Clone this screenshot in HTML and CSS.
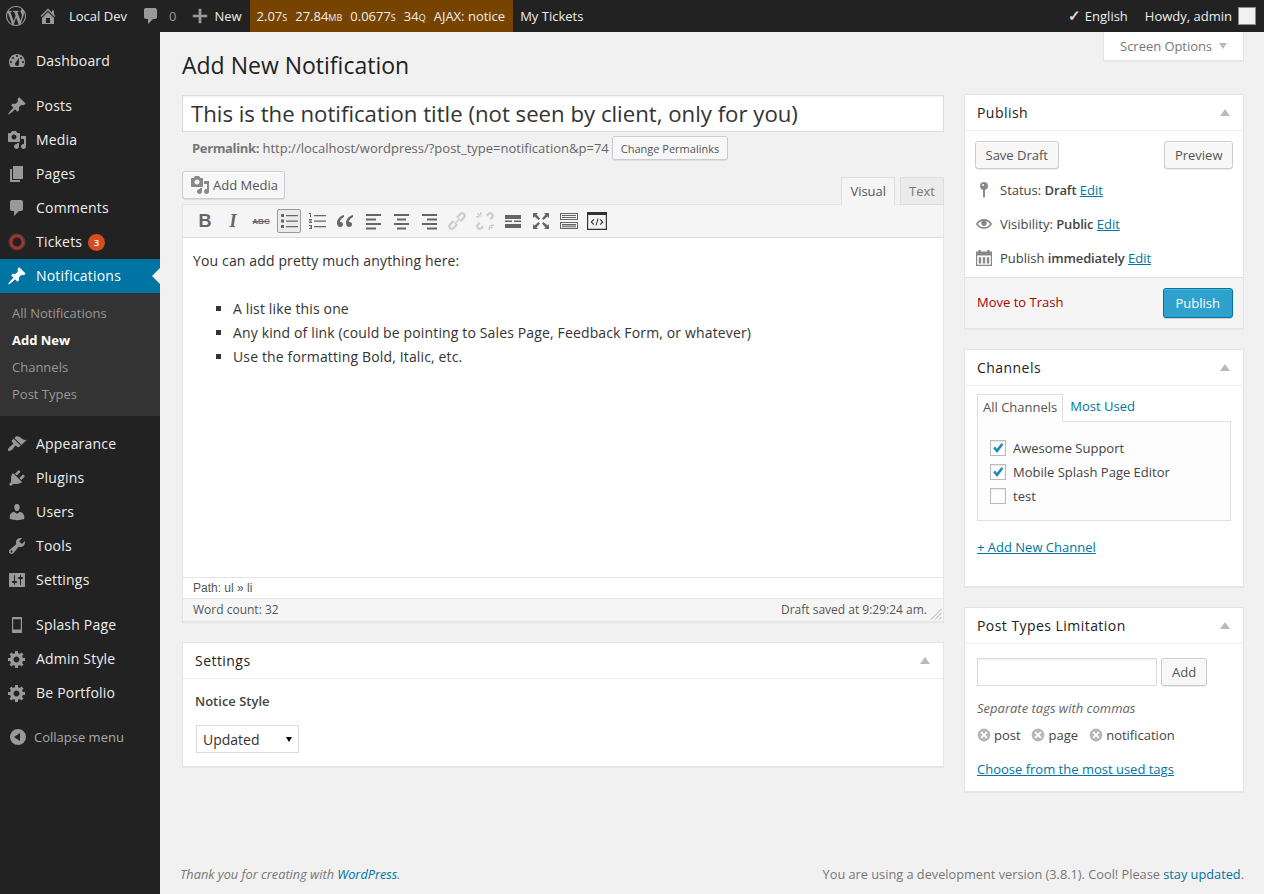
FILE: index.html
```html
<!DOCTYPE html>
<html lang="en">
<head>
    <meta charset="UTF-8">
    <meta name="viewport" content="width=device-width, initial-scale=1.0">
    <title>Add New Notification</title>
    <link rel="stylesheet" href="styles.css">
</head>
<body>

<svg class="sprite" aria-hidden="true">
    <symbol id="i-wp" viewBox="0 0 20 20"><path d="M20 10c0-5.51-4.49-10-10-10C4.48 0 0 4.49 0 10c0 5.52 4.48 10 10 10 5.51 0 10-4.48 10-10zM7.78 15.37L4.37 6.22c.55-.02 1.17-.08 1.17-.08.5-.06.44-1.13-.06-1.11 0 0-1.45.11-2.37.11-.18 0-.37 0-.58-.01C4.12 2.69 6.87 1.11 10 1.11c2.33 0 4.45.87 6.05 2.34-.68-.11-1.65.39-1.65 1.58 0 .74.45 1.36.9 2.1.35.61.55 1.36.55 2.46 0 1.49-1.4 5-1.4 5l-3.03-8.37c.54-.02.82-.17.82-.17.5-.05.44-1.25-.06-1.22 0 0-1.44.12-2.38.12-.87 0-2.33-.12-2.33-.12-.5-.03-.56 1.2-.06 1.22l.92.08 1.26 3.41zM17.41 10c.24-.64.74-1.87.43-4.25.7 1.29 1.05 2.71 1.05 4.25 0 3.29-1.73 6.24-4.4 7.78.97-2.59 1.94-5.2 2.92-7.78zM6.1 18.09C3.12 16.65 1.11 13.53 1.11 10c0-1.3.23-2.48.72-3.59C3.25 10.3 4.67 14.2 6.1 18.09zm4.03-6.63l2.58 6.98c-.86.29-1.76.45-2.71.45-.79 0-1.57-.11-2.29-.33.81-2.38 1.62-4.74 2.42-7.1z"/></symbol>
    <symbol id="i-home" viewBox="0 0 20 20"><path d="M16 8.5l1.53 1.53-1.06 1.06L10 4.62l-6.47 6.47-1.06-1.06L10 2.5l4 4v-2h2v4zm-6-2.46l6 5.99V18H4v-5.97zM12 17v-5H8v5h4z"/></symbol>
    <symbol id="i-comment" viewBox="0 0 20 20"><path d="M5 2h9c1.1 0 2 .9 2 2v7c0 1.1-.9 2-2 2h-2l-5 5v-5H5c-1.1 0-2-.9-2-2V4c0-1.1.9-2 2-2z"/></symbol>
    <symbol id="i-plus" viewBox="0 0 20 20"><path d="M18 8.5v3h-6.500V18h-3v-6.500H2v-3h6.500V2h3v6.500z"/></symbol>
    <symbol id="i-dash" viewBox="0 0 20 20"><path d="M3.76 16h12.48c1.1-1.37 1.76-3.11 1.76-5 0-4.42-3.58-8-8-8s-8 3.58-8 8c0 1.89.66 3.63 1.76 5zM10 4c.55 0 1 .45 1 1s-.45 1-1 1-1-.45-1-1 .45-1 1-1zM6 6c.55 0 1 .45 1 1s-.45 1-1 1-1-.45-1-1 .45-1 1-1zm8 0c.55 0 1 .45 1 1s-.45 1-1 1-1-.45-1-1 .45-1 1-1zm-5.370 5.550L12 7v6c0 1.100-.9 2-2 2s-2-.9-2-2c0-.57.24-1.080.63-1.450zM4 10c.55 0 1 .45 1 1s-.45 1-1 1-1-.45-1-1 .45-1 1-1zm12 0c.55 0 1 .45 1 1s-.45 1-1 1-1-.45-1-1 .45-1 1-1z"/></symbol>
    <symbol id="i-pin" viewBox="0 0 20 20"><path d="M10.44 3.020l1.820-1.820 6.360 6.350-1.830 1.820c-1.050-.68-2.480-.57-3.410.36l-.75.75c-.92.93-1.040 2.350-.35 3.410l-1.830 1.820-2.410-2.410-2.800 2.790c-.42.42-3.380 2.710-3.800 2.290s1.860-3.390 2.280-3.810l2.790-2.790L4.100 9.360l1.830-1.820c1.050.69 2.480.57 3.400-.36l.75-.75c.93-.92 1.050-2.350.36-3.410z"/></symbol>
    <symbol id="i-media" viewBox="0 0 20 20"><path d="M13 11V4c0-.55-.45-1-1-1h-1.670L9 1H5L3.670 3H2c-.55 0-1 .45-1 1v7c0 .55.45 1 1 1h10c.55 0 1-.45 1-1zM7 4.500c1.380 0 2.500 1.120 2.500 2.500S8.380 9.500 7 9.500 4.500 8.380 4.500 7 5.620 4.500 7 4.500zM14 6h5v10.500c0 1.380-1.120 2.500-2.500 2.500S14 17.880 14 16.500s1.120-2.500 2.500-2.500c.17 0 .34.02.5.05V9h-3V6zm-4 8.050V13h2v3.500c0 1.380-1.120 2.500-2.500 2.500S7 17.880 7 16.500 8.120 14 9.500 14c.17 0 .34.02.5.05z"/></symbol>
    <symbol id="i-page" viewBox="0 0 20 20"><path d="M6 15V2h10v13H6zm-1 1h8v2H3V5h2v11z"/></symbol>
    <symbol id="i-brush" viewBox="0 0 20 20"><path d="M14.480 11.060L7.410 3.990l1.500-1.500c.5-.56 2.300-.47 3.510.32 1.210.8 1.430 1.280 2.910 2.100 1.180.64 2.450 1.260 4.450.85zm-.71.710L6.700 4.700 4.930 6.470c-.39.39-.39 1.020 0 1.410l1.060 1.060c.39.39.39 1.030 0 1.420-.6.6-1.430 1.110-2.210 1.690-.35.26-.7.53-1.010.84C1.430 13.710.4 15.840 1.200 16.640s2.930-.23 4.270-1.470c.31-.31.58-.66.84-1.010.58-.78 1.090-1.610 1.690-2.210.39-.39 1.020-.39 1.410 0l1.060 1.060c.39.39 1.020.39 1.410 0z"/></symbol>
    <symbol id="i-plug" viewBox="0 0 20 20"><path d="M13.110 4.360L9.870 7.600 8 5.730l3.240-3.240c.35-.34 1.050-.2 1.560.32.52.51.66 1.210.31 1.550zm-8 1.770l.91-1.120 9.010 9.010-1.190.84c-.71.71-2.630 1.160-3.820 1.160H6.140L4.900 17.260c-.59.59-1.540.59-2.120 0-.59-.58-.59-1.530 0-2.120l1.240-1.240v-3.880c0-1.130.4-3.190 1.090-3.890zm7.260 3.970l3.240-3.240c.34-.35 1.040-.21 1.550.31.52.51.66 1.210.31 1.550l-3.240 3.250z"/></symbol>
    <symbol id="i-user" viewBox="0 0 20 20"><path d="M10 9.250c-2.270 0-2.730-3.440-2.730-3.440C7 4.020 7.820 2 9.970 2c2.160 0 2.980 2.020 2.710 3.810 0 0-.41 3.440-2.680 3.440zm0 2.570L12.720 10c2.390 0 4.520 2.330 4.520 4.530v2.490s-3.650 1.130-7.240 1.130c-3.650 0-7.240-1.130-7.240-1.130v-2.490c0-2.250 1.940-4.480 4.470-4.480z"/></symbol>
    <symbol id="i-tool" viewBox="0 0 20 20"><path d="M16.680 9.770c-1.340 1.340-3.300 1.670-4.950.99l-5.410 6.520c-.99.99-2.590.99-3.580 0s-.99-2.590 0-3.570l6.520-5.420c-.68-1.650-.35-3.610.99-4.950 1.280-1.280 3.120-1.620 4.720-1.060l-2.890 2.890 2.820 2.820 2.860-2.870c.53 1.580.18 3.390-1.080 4.650zM3.810 16.210c.4.39 1.040.39 1.430 0 .4-.4.4-1.040 0-1.430-.39-.4-1.030-.4-1.430 0-.39.39-.39 1.030 0 1.430z"/></symbol>
    <symbol id="i-sliders" viewBox="0 0 20 20"><path d="M18 16V4c0-.55-.45-1-1-1H3c-.55 0-1 .45-1 1v12c0 .55.45 1 1 1h14c.55 0 1-.45 1-1zM8 11h1c.55 0 1 .45 1 1s-.45 1-1 1H8v1.500c0 .28-.22.5-.5.5s-.5-.22-.5-.5V13H6c-.55 0-1-.45-1-1s.45-1 1-1h1V5.500c0-.28.22-.5.5-.5s.5.22.5.5V11zm5-2h-1c-.55 0-1-.45-1-1s.45-1 1-1h1V5.500c0-.28.22-.5.5-.5s.5.22.5.5V7h1c.55 0 1 .45 1 1s-.45 1-1 1h-1v5.500c0 .28-.22.5-.5.5s-.5-.22-.5-.5V9z"/></symbol>
    <symbol id="i-phone" viewBox="0 0 20 20"><path d="M6 2h8c.55 0 1 .45 1 1v14c0 .55-.45 1-1 1H6c-.55 0-1-.45-1-1V3c0-.55.45-1 1-1zm7.800 12.500V4.200H6.200v10.300h7.600z"/></symbol>
    <symbol id="i-gear" viewBox="0 0 20 20"><path d="M18 12h-2.180c-.17.7-.44 1.350-.81 1.930l1.540 1.540-2.100 2.100-1.540-1.540c-.58.36-1.230.63-1.910.79V19H8v-2.180c-.68-.16-1.330-.43-1.910-.79l-1.540 1.540-2.120-2.120 1.540-1.540c-.36-.58-.63-1.230-.79-1.910H1V9.030h2.170c.16-.7.44-1.350.8-1.940L2.430 5.550l2.100-2.100 1.540 1.540c.58-.37 1.240-.64 1.930-.81V2h3v2.180c.68.16 1.330.43 1.910.79l1.540-1.540 2.120 2.120-1.540 1.540c.36.59.64 1.240.8 1.940H18V12zm-8.500 1.500c1.660 0 3-1.340 3-3s-1.340-3-3-3-3 1.340-3 3 1.340 3 3 3z"/></symbol>
    <symbol id="i-collapse" viewBox="0 0 20 20"><path d="M10 2a8 8 0 1 1 0 16 8 8 0 0 1 0-16zm2 4l-6 4 6 4z"/></symbol>
    <symbol id="i-key" viewBox="0 0 20 20"><path d="M10 0a5 5 0 0 1 1.200 9.850V18l-1.200 2-1.200-2V9.850A5 5 0 0 1 10 0zM9 2.500a1.200 1.200 0 1 0 0 2.400 1.200 1.200 0 0 0 0-2.400z"/></symbol>
    <symbol id="i-eye" viewBox="0 0 20 20"><path d="M19.700 9.400C17.700 6 14 3.900 10 3.900S2.300 6 .3 9.400L0 10l.3.6c2 3.400 5.700 5.500 9.700 5.500s7.700-2.100 9.700-5.500l.3-.6-.3-.6zM10 14.100c-3.100 0-6-1.600-7.700-4.100C3.600 8 5.700 6.600 8 6.100c-.9.6-1.500 1.700-1.500 2.900 0 1.900 1.600 3.500 3.500 3.500s3.500-1.600 3.500-3.500c0-1.200-.6-2.300-1.500-2.900 2.300.5 4.400 1.900 5.700 3.900-1.700 2.500-4.600 4.100-7.700 4.100z"/></symbol>
    <symbol id="i-cal" viewBox="0 0 20 20"><path fill-rule="evenodd" d="M0 2h3V0h3v2h8V0h3v2h3v18H0V2zm1.500 5v11.500h17V7h-17zM3.500 9h3v8h-3zm5 0h3v8h-3zm5 0h3v8h-3z"/></symbol>
    <symbol id="i-check" viewBox="0 0 20 20"><path d="M3 10.500l2.500-2.500 3 3L15 3l2.500 2.500L8.800 17z"/></symbol>
    <symbol id="i-x" viewBox="0 0 20 20"><path fill-rule="evenodd" d="M10 2a8 8 0 1 1 0 16 8 8 0 0 1 0-16zM7.300 5.600L5.600 7.300 8.300 10l-2.700 2.700 1.700 1.700 2.700-2.700 2.700 2.700 1.700-1.700-2.700-2.700 2.700-2.700-1.700-1.700L10 8.300z"/></symbol>
    <symbol id="t-ul" viewBox="0 0 20 20"><path d="M2 3h3v3H2zm0 5.500h3v3H2zM2 14h3v3H2zM7 4h12v1.200H7zm0 5.500h12v1.200H7zM7 15h12v1.200H7z"/></symbol>
    <symbol id="t-ol" viewBox="0 0 20 20"><path d="M2 2h2v4H3V3H2zm0 6h3v1l-2 1.500h2V12H2v-1l2-1.500H2zm0 6h3v4H2v-1h2v-.5H3v-1h1V15H2zM7 4h12v1.200H7zm0 5.500h12v1.200H7zM7 15h12v1.200H7z"/></symbol>
    <symbol id="t-quote" viewBox="0 0 20 20"><path d="M9 4C5 5 2 8 2 12c0 2 1 4 3.200 4C7 16 8 14.800 8 13.300 8 11.800 7 11 5.700 11c-.5 0-.8 0-1 .2C5 9 6.500 7.300 9 6zm9 0c-4 1-7 4-7 8 0 2 1 4 3.200 4 1.800 0 2.800-1.200 2.800-2.700 0-1.500-1-2.300-2.300-2.300-.5 0-.8 0-1 .2.300-2.200 1.800-3.900 4.300-5.200z"/></symbol>
    <symbol id="t-left" viewBox="0 0 20 20"><path d="M3 3h15v2H3zm0 4.500h10v2H3zM3 12h15v2H3zm0 4.500h10v2H3z"/></symbol>
    <symbol id="t-center" viewBox="0 0 20 20"><path d="M3 3h15v2H3zm3 4.500h9v2H6zM3 12h15v2H3zm3 4.500h9v2H6z"/></symbol>
    <symbol id="t-right" viewBox="0 0 20 20"><path d="M3 3h15v2H3zm5 4.500h10v2H8zM3 12h15v2H3zm5 4.500h10v2H8z"/></symbol>
    <symbol id="t-link" viewBox="0 0 20 20"><path d="M17.700 2.300a3.500 3.500 0 0 0-5 0L9 6l1.500 1.500 3.700-3.700a1.400 1.400 0 0 1 2 2L12.500 9.500 14 11l3.700-3.700a3.500 3.500 0 0 0 0-5zM6 9l-3.700 3.700a3.500 3.500 0 0 0 5 5L11 14l-1.500-1.500-3.700 3.700a1.400 1.400 0 0 1-2-2L7.500 10.500zm1 3.500l5.500-5.500 1 1L8 13.500z"/></symbol>
    <symbol id="t-unlink" viewBox="0 0 20 20"><path d="M17.700 2.300a3.500 3.500 0 0 0-5 0L11 4l1.500 1.500 1.700-1.700a1.400 1.400 0 0 1 2 2L14.500 7.500 16 9l1.700-1.700a3.500 3.500 0 0 0 0-5zM4 11l-1.700 1.700a3.500 3.500 0 0 0 5 5L9 16l-1.500-1.500-1.700 1.700a1.400 1.400 0 0 1-2-2l1.700-1.700zM2 3l1-1 3 3-1 1zM14 15l1-1 3 3-1 1zM5 1h1.500v3H5zM1 5h3v1.500H1zM13.500 16H15v3h-1.500zM16 13.500h3V15h-3z"/></symbol>
    <symbol id="t-more" viewBox="0 0 20 20"><path d="M2 4h16v4H2zm0 9h16v4H2zm0-3.500h7v1.500H2zm9 0h7v1.500h-7z"/></symbol>
    <symbol id="t-full" viewBox="0 0 20 20"><path d="M2 2h5L5.500 3.500 9 7.500 7.500 9 3.500 5.500 2 7zm16 0v5l-1.500-1.500L12.500 9 11 7.500l3.500-4L13 2zM2 18v-5l1.500 1.500L7.500 11 9 12.500l-3.500 4L7 18zm16 0h-5l1.500-1.500-3.500-4 1.500-1.500 4 3.500L18 13z"/></symbol>
    <symbol id="t-kitchen" viewBox="0 0 20 20"><path fill-rule="evenodd" d="M1 2h18v7H1zm1 1v5h16V3zm1 1h14v1H3zm0 2h14v1H3zM1 11h18v7H1zm1 1v5h16v-5zm1 1h14v1.500H3zm0 2.200h14v1H3z"/></symbol>
    <symbol id="t-code" viewBox="0 0 20 20"><path fill-rule="evenodd" d="M0 1h20v18H0zm1.200 3v13.800h17.600V4zM6.500 8L3.500 11l3 3 .8-.8L5.100 11l2.200-2.200zm7 0l-.8.800L14.900 11l-2.200 2.200.8.800 3-3zM10.500 7.500L8.500 14.500h1l2-7z"/></symbol>
</svg>

<div class="adminbar">
    <a class="bar-item bar-logo"><svg class="bar-icon"><use href="#i-wp"/></svg></a>
    <a class="bar-item bar-home"><svg class="bar-icon"><use href="#i-home"/></svg><span>Local Dev</span></a>
    <a class="bar-item bar-muted"><svg class="bar-icon"><use href="#i-comment"/></svg><span>0</span></a>
    <a class="bar-item bar-new"><svg class="bar-icon"><use href="#i-plus"/></svg><span>New</span></a>
    <div class="bar-debug">
        <span class="caps">2.07s</span>
        <span class="caps">27.84mb</span>
        <span class="caps">0.0677s</span>
        <span class="caps">34q</span>
        <span>AJAX: notice</span>
    </div>
    <a class="bar-item bar-tickets">My Tickets</a>
    <div class="bar-right">
        <a class="bar-lang"><span class="bar-check">✓</span> English</a>
        <a class="bar-howdy">Howdy, admin <span class="avatar"></span></a>
    </div>
</div>

<div class="layout">
    <nav class="sidebar">
        <ul class="menu">
            <li class="menu-item"><svg class="menu-icon"><use href="#i-dash"/></svg>Dashboard</li>
            <li class="menu-sep"></li>
            <li class="menu-item"><svg class="menu-icon"><use href="#i-pin"/></svg>Posts</li>
            <li class="menu-item"><svg class="menu-icon"><use href="#i-media"/></svg>Media</li>
            <li class="menu-item"><svg class="menu-icon"><use href="#i-page"/></svg>Pages</li>
            <li class="menu-item"><svg class="menu-icon"><use href="#i-comment"/></svg>Comments</li>
            <li class="menu-item">
                <svg class="menu-icon" viewBox="0 0 20 20"><circle cx="10" cy="10" r="6" fill="none" stroke="#a8322c" stroke-width="3"/><circle cx="10" cy="10" r="8" fill="none" stroke="#55504a" stroke-width="0.8"/></svg>
                Tickets <span class="badge">3</span>
            </li>
            <li class="menu-item current"><svg class="menu-icon"><use href="#i-pin"/></svg>Notifications<span class="current-arrow"></span></li>
            <li>
                <ul class="submenu">
                    <li>All Notifications</li>
                    <li class="current-sub">Add New</li>
                    <li>Channels</li>
                    <li>Post Types</li>
                </ul>
            </li>
            <li class="menu-sep"></li>
            <li class="menu-item"><svg class="menu-icon"><use href="#i-brush"/></svg>Appearance</li>
            <li class="menu-item"><svg class="menu-icon"><use href="#i-plug"/></svg>Plugins</li>
            <li class="menu-item"><svg class="menu-icon"><use href="#i-user"/></svg>Users</li>
            <li class="menu-item"><svg class="menu-icon"><use href="#i-tool"/></svg>Tools</li>
            <li class="menu-item"><svg class="menu-icon"><use href="#i-sliders"/></svg>Settings</li>
            <li class="menu-sep"></li>
            <li class="menu-item"><svg class="menu-icon"><use href="#i-phone"/></svg>Splash Page</li>
            <li class="menu-item"><svg class="menu-icon"><use href="#i-gear"/></svg>Admin Style</li>
            <li class="menu-item"><svg class="menu-icon"><use href="#i-gear"/></svg>Be Portfolio</li>
            <li class="menu-collapse"><svg class="menu-icon"><use href="#i-collapse"/></svg>Collapse menu</li>
        </ul>
    </nav>

    <main class="content">
        <div class="screen-options">Screen Options <span class="arrow-down"></span></div>
        <h1 class="page-title">Add New Notification</h1>

        <div class="columns">
            <div class="col-main">
                <input class="title-input" type="text" value="This is the notification title (not seen by client, only for you)">
                <div class="permalink">
                    <span><strong>Permalink:</strong> http://localhost/wordpress/?post_type=notification&amp;p=74</span>
                    <button class="btn btn-small">Change Permalinks</button>
                </div>

                <div class="editor-tools">
                    <button class="btn btn-media"><svg class="media-icon"><use href="#i-media"/></svg>Add Media</button>
                    <div class="editor-tabs">
                        <span class="editor-tab active">Visual</span>
                        <span class="editor-tab">Text</span>
                    </div>
                </div>

                <div class="editor">
                    <div class="toolbar">
                        <span class="tool tool-b">B</span>
                        <span class="tool tool-i">I</span>
                        <span class="tool tool-s">ABC</span>
                        <span class="tool tool-on"><svg><use href="#t-ul"/></svg></span>
                        <span class="tool"><svg><use href="#t-ol"/></svg></span>
                        <span class="tool"><svg><use href="#t-quote"/></svg></span>
                        <span class="tool"><svg><use href="#t-left"/></svg></span>
                        <span class="tool"><svg><use href="#t-center"/></svg></span>
                        <span class="tool"><svg><use href="#t-right"/></svg></span>
                        <span class="tool tool-off"><svg><use href="#t-link"/></svg></span>
                        <span class="tool tool-off"><svg><use href="#t-unlink"/></svg></span>
                        <span class="tool"><svg><use href="#t-more"/></svg></span>
                        <span class="tool"><svg><use href="#t-full"/></svg></span>
                        <span class="tool"><svg><use href="#t-kitchen"/></svg></span>
                        <span class="tool tool-dark"><svg><use href="#t-code"/></svg></span>
                    </div>
                    <div class="editor-body">
                        <p>You can add pretty much anything here:</p>
                        <ul>
                            <li>A list like this one</li>
                            <li>Any kind of link (could be pointing to Sales Page, Feedback Form, or whatever)</li>
                            <li>Use the formatting Bold, Italic, etc.</li>
                        </ul>
                    </div>
                    <div class="editor-path">Path: ul » li</div>
                    <div class="editor-status">
                        <span>Word count: 32</span>
                        <span class="status-right">Draft saved at 9:29:24 am.
                            <svg class="resize" viewBox="0 0 12 12"><path d="M11.500 1L1 11.500M11.500 5L5 11.500M11.500 9L9 11.500" stroke="#aaa" fill="none"/></svg>
                        </span>
                    </div>
                </div>

                <section class="box box-settings">
                    <header class="box-head"><h3>Settings</h3><span class="arrow-up"></span></header>
                    <div class="box-body settings-body">
                        <div class="field-label">Notice Style</div>
                        <div class="select">Updated<span class="select-arrow"></span></div>
                    </div>
                </section>
            </div>

            <aside class="col-side">
                <section class="box">
                    <header class="box-head"><h3>Publish</h3><span class="arrow-up"></span></header>
                    <div class="publish-body">
                        <div class="publish-btns">
                            <button class="btn">Save Draft</button>
                            <button class="btn">Preview</button>
                        </div>
                        <div class="pub-row"><svg class="pub-icon"><use href="#i-key"/></svg><span>Status: <b>Draft</b> <a href="#">Edit</a></span></div>
                        <div class="pub-row"><svg class="pub-icon"><use href="#i-eye"/></svg><span>Visibility: <b>Public</b> <a href="#">Edit</a></span></div>
                        <div class="pub-row"><svg class="pub-icon"><use href="#i-cal"/></svg><span>Publish <b>immediately</b> <a href="#">Edit</a></span></div>
                    </div>
                    <div class="publish-actions">
                        <a class="trash">Move to Trash</a>
                        <button class="btn btn-primary">Publish</button>
                    </div>
                </section>

                <section class="box">
                    <header class="box-head"><h3>Channels</h3><span class="arrow-up"></span></header>
                    <div class="box-body channels-body">
                        <div class="cat-tabs">
                            <span class="cat-tab active">All Channels</span>
                            <span class="cat-tab">Most Used</span>
                        </div>
                        <div class="cat-panel">
                            <div class="cat-row"><span class="checkbox"><svg><use href="#i-check"/></svg></span>Awesome Support</div>
                            <div class="cat-row"><span class="checkbox"><svg><use href="#i-check"/></svg></span>Mobile Splash Page Editor</div>
                            <div class="cat-row"><span class="checkbox"></span>test</div>
                        </div>
                        <a class="box-link" href="#">+ Add New Channel</a>
                    </div>
                </section>

                <section class="box box-last">
                    <header class="box-head"><h3>Post Types Limitation</h3><span class="arrow-up"></span></header>
                    <div class="box-body tags-body">
                        <div class="tag-add">
                            <input class="tag-input" type="text">
                            <button class="btn">Add</button>
                        </div>
                        <p class="tag-help">Separate tags with commas</p>
                        <div class="tag-list">
                            <span class="tag"><svg><use href="#i-x"/></svg>post</span>
                            <span class="tag"><svg><use href="#i-x"/></svg>page</span>
                            <span class="tag"><svg><use href="#i-x"/></svg>notification</span>
                        </div>
                        <a class="box-link" href="#">Choose from the most used tags</a>
                    </div>
                </section>
            </aside>
        </div>

        <footer class="footer">
            <em>Thank you for creating with <a>WordPress</a>.</em>
            <span>You are using a development version (3.8.1). Cool! Please <a>stay updated</a>.</span>
        </footer>
    </main>
</div>

</body>
</html>
```

FILE: styles.css
```css
* { box-sizing: border-box; }
html, body { margin: 0; padding: 0; }
body {
    font-family: "Open Sans", sans-serif;
    font-size: 13px;
    line-height: 1.4;
    color: #444;
    background: #f1f1f1;
    height: 894px;
    overflow: hidden;
}
a { color: #0074a2; }
ul { list-style: none; margin: 0; padding: 0; }
.sprite { display: none; }
svg { fill: currentColor; }

/* admin bar */
.adminbar {
    display: flex;
    align-items: center;
    height: 32px;
    background: #222;
    color: #eee;
    font-size: 13px;
    white-space: nowrap;
}
.adminbar a { color: #eee; }
.bar-item {
    display: flex;
    align-items: center;
    height: 32px;
    padding: 0 7px;
}
.bar-icon { width: 20px; height: 20px; color: #999; margin-right: 7px; }
.bar-logo { padding: 0 6px; }
.bar-logo .bar-icon { margin-right: 0; }
.bar-home { padding-left: 6px; }
.bar-home .bar-icon { margin-right: 11px; }
.adminbar .bar-muted { color: #999; padding-right: 11px; }
.bar-muted .bar-icon { margin-right: 8px; }
.bar-new { padding: 0 8px 0 4px; }
.bar-new .bar-icon { width: 18px; height: 18px; margin-right: 5px; }
.bar-debug {
    display: flex;
    gap: 8px;
    align-items: center;
    height: 32px;
    padding: 0 8px 0 7px;
    background: #774400;
}
.caps { font-variant: small-caps; }
.bar-tickets { padding: 0 7px; }
.bar-right {
    margin-left: auto;
    display: flex;
    align-items: center;
    gap: 17px;
    padding-right: 8px;
}
.bar-check { color: #ddd; font-weight: 700; font-size: 15px; line-height: 1; }
.bar-howdy { display: flex; align-items: center; gap: 6px; }
.avatar {
    display: block;
    width: 18px;
    height: 18px;
    background: #f1f1f1;
    border: 1px solid #8a8a8a;
}

/* layout */
.layout { display: flex; height: 862px; }
.sidebar {
    flex: 0 0 160px;
    background: #222;
    color: #eee;
    font-size: 14px;
    letter-spacing: .2px;
}
.menu { padding-top: 12px; }
.menu-item {
    display: flex;
    align-items: center;
    height: 34px;
}
.menu-icon {
    flex: none;
    width: 20px;
    height: 20px;
    margin: 0 9px 0 7px;
    color: #999;
}
.menu-sep { height: 11px; }
.badge {
    display: inline-block;
    width: 17px;
    height: 17px;
    margin-left: 6px;
    border-radius: 50%;
    background: #d54e21;
    color: #fff;
    font-size: 9px;
    font-weight: 600;
    line-height: 17px;
    text-align: center;
}
.current { background: #0074a2; color: #fff; }
.current .menu-icon { color: #fff; }
.current-arrow {
    margin-left: auto;
    border: 8px solid transparent;
    border-right-color: #f1f1f1;
    border-left-width: 0;
}
.submenu { background: #333; padding: 7px 0 8px; font-size: 13px; color: #999; letter-spacing: 0; }
.submenu li { height: 27px; line-height: 27px; padding-left: 12px; }
.submenu .current-sub { color: #fff; font-weight: 700; }
.menu-collapse {
    display: flex;
    align-items: center;
    height: 34px;
    margin-top: 10px;
    font-size: 13px;
    letter-spacing: 0;
    color: #aaa;
}
.menu-collapse .menu-icon { margin: 0 6px 0 8px; }

/* content */
.content {
    flex: 1;
    display: flex;
    flex-direction: column;
    padding: 0 20px 0 22px;
    min-width: 0;
}
.screen-options {
    align-self: flex-end;
    display: flex;
    align-items: center;
    gap: 4px;
    height: 29px;
    margin-bottom: -29px;
    padding: 0 16px 0 16px;
    background: #fff;
    border: 1px solid #e5e5e5;
    border-top: 0;
    box-shadow: 0 1px 1px rgba(0,0,0,.04);
    color: #777;
    letter-spacing: -.05px;
}
.arrow-down { border: 4px solid transparent; border-top: 6px solid #bbb; border-bottom: 0; margin: 0 0 0 3px; }
.arrow-up { border: 5px solid transparent; border-bottom: 7px solid #bbb; border-top: 0; }
.page-title {
    margin: 0;
    padding: 17px 0 13px;
    font-size: 23px;
    font-weight: 400;
    line-height: 33px;
    color: #222;
}
.columns { display: flex; gap: 20px; align-items: flex-start; }
.col-main { flex: 0 0 762px; }
.col-side { flex: 0 0 280px; margin-top: -1px; }

.title-input {
    display: block;
    width: 100%;
    height: 37px;
    padding: 0 8px 1px;
    border: 1px solid #ddd;
    background: #fff;
    font: 22.2px "Open Sans", sans-serif;
    color: #333;
    box-shadow: inset 0 1px 2px rgba(0,0,0,.07);
    outline: 0;
}
.permalink {
    display: flex;
    align-items: center;
    gap: 3px;
    height: 24px;
    margin-top: 4px;
    padding-left: 10px;
    color: #666;
    white-space: pre;
}
.permalink strong { font-weight: 700; color: #777; letter-spacing: -.35px; }
.btn {
    display: inline-flex;
    align-items: center;
    justify-content: center;
    height: 28px;
    padding: 0 10px;
    border: 1px solid #ccc;
    border-radius: 3px;
    background: #f7f7f7;
    box-shadow: inset 0 1px 0 #fff, 0 1px 0 rgba(0,0,0,.08);
    font: 13px "Open Sans", sans-serif;
    color: #555;
}
.btn-small { height: 24px; padding: 0 8px; font-size: 11px; }
.btn-media { padding: 0 6px 0 7px; align-self: flex-start; }
.media-icon { width: 20px; height: 20px; color: #888; margin-right: 3px; }
.btn-primary {
    height: 30px;
    padding: 0 12px;
    background: #2ea2cc;
    border-color: #0074a2;
    color: #fff;
    box-shadow: inset 0 1px 0 rgba(120,200,230,.5), 0 1px 0 rgba(0,0,0,.15);
}
.editor-tools {
    display: flex;
    justify-content: space-between;
    align-items: flex-end;
    height: 33px;
    margin-top: 11px;
}
.editor-tabs { display: flex; gap: 5px; margin-bottom: -1px; }
.editor-tab {
    height: 28px;
    padding: 0 8px;
    line-height: 26px;
    background: #ebebeb;
    border: 1px solid #dedede;
    color: #777;
}
.editor-tab.active { background: #f5f5f5; border-bottom-color: #f5f5f5; color: #555; }
.editor {
    border: 1px solid #e5e5e5;
    background: #fff;
    box-shadow: 0 1px 1px rgba(0,0,0,.04);
}
.toolbar {
    display: flex;
    gap: 4px;
    align-items: center;
    height: 33px;
    padding: 0 0 0 10px;
    background: #f5f5f5;
    border-bottom: 1px solid #dedede;
    color: #666;
}
.tool {
    display: flex;
    align-items: center;
    justify-content: center;
    width: 24px;
    height: 24px;
}
.tool svg { width: 20px; height: 20px; }
.tool-b { font: 700 18px "Liberation Sans", sans-serif; color: #666; }
.tool-i { font: italic 700 18px "Liberation Serif", serif; color: #666; }
.tool-s { font: 700 8px "Liberation Sans", sans-serif; text-decoration: line-through; }
.tool-on { background: #ebebeb; border: 1px solid #999; border-radius: 2px; }
.tool-off { color: #ccc; }
.tool-dark { color: #333; }
.editor-body {
    height: 340px;
    padding: 11px 10px;
    font-size: 14px;
    line-height: 24px;
    letter-spacing: .14px;
    color: #333;
    border-bottom: 1px solid #e5e5e5;
}
.editor-body p { margin: 0 0 24px; }
.editor-body ul { list-style: square; padding-left: 40px; }
.editor-path {
    height: 21px;
    padding-left: 10px;
    font: 12px/20px "Liberation Sans", sans-serif;
    color: #555;
    border-bottom: 1px solid #e5e5e5;
}
.editor-status {
    display: flex;
    justify-content: space-between;
    height: 22px;
    padding: 0 0 0 10px;
    background: #f5f5f5;
    font-size: 12px;
    line-height: 21px;
    color: #555;
}
.status-right { display: flex; padding-right: 1px; }
.resize { width: 12px; height: 12px; margin: 9px 0 0 3px; fill: none; }

/* meta boxes */
.box {
    background: #fff;
    border: 1px solid #e5e5e5;
    box-shadow: 0 1px 1px rgba(0,0,0,.04);
    margin-bottom: 20px;
}
.box-last { margin-bottom: 0; }
.box-settings { margin-top: 20px; }
.box-head {
    display: flex;
    justify-content: space-between;
    align-items: center;
    height: 36px;
    padding: 0 13px 0 12px;
    border-bottom: 1px solid #eee;
}
.box-head h3 { margin: 0; font-size: 14px; font-weight: 400; color: #222; letter-spacing: .45px; }
.box-body { padding: 12px; }
.settings-body { height: 87px; padding: 12px 12px 0; }
.field-label { font-weight: 600; line-height: 20px; }
.select {
    display: flex;
    align-items: center;
    justify-content: space-between;
    width: 103px;
    height: 28px;
    margin: 14px 0 0 1px;
    padding: 1px 6px 0;
    border: 1px solid #ddd;
    background: #fff;
    font-size: 14px;
    color: #333;
}
.select-arrow { border: 3.5px solid transparent; border-top: 5px solid #000; border-bottom: 0; }

.publish-body { padding: 10px 10px 0; height: 146px; }
.publish-btns { display: flex; justify-content: space-between; margin-bottom: 4px; }
.publish-btns .btn { padding: 0 9.5px; }
.pub-row { display: flex; align-items: center; height: 34px; padding-left: 1px; white-space: pre; }
.pub-row b { font-weight: 600; letter-spacing: -.15px; }
.pub-icon { width: 16px; height: 18px; margin-right: 8px; color: #888; }
.publish-actions {
    display: flex;
    justify-content: space-between;
    align-items: center;
    height: 51px;
    padding: 0 10px 2px 12px;
    background: #f5f5f5;
    border-top: 1px solid #dfdfdf;
}
.publish-actions .btn { margin-top: 2px; }
.trash { color: #a00; }

.channels-body { padding: 8px 12px 0; height: 200px; }
.cat-tabs { display: flex; height: 28px; align-items: flex-end; margin-bottom: -1px; }
.cat-tab { padding: 0 9px; height: 28px; line-height: 25px; color: #0074a2; }
.cat-tab.active {
    padding: 0 5px;
    background: #fdfdfd;
    border: 1px solid #dfdfdf;
    border-bottom-color: #fdfdfd;
    color: #555;
    position: relative;
}
.cat-tab + .cat-tab { padding-left: 7px; }
.cat-panel {
    width: 254px;
    height: 100px;
    padding: 14px 12px 0;
    background: #fdfdfd;
    border: 1px solid #dfdfdf;
}
.cat-row { display: flex; align-items: center; height: 24px; }
.checkbox {
    display: flex;
    align-items: center;
    justify-content: center;
    width: 16px;
    height: 16px;
    margin-right: 7px;
    border: 1px solid #bbb;
    background: #fff;
    box-shadow: inset 0 1px 2px rgba(0,0,0,.1);
    color: #1e8cbe;
}
.checkbox svg { width: 14px; height: 14px; }
.box-link { display: block; text-decoration: underline; }
.channels-body .box-link { margin-top: 17px; }

.tags-body { padding: 14px 12px 0; height: 147px; }
.tag-add { display: flex; gap: 4px; }
.tag-input { width: 180px; height: 28px; border: 1px solid #ddd; background: #fff; box-shadow: inset 0 1px 2px rgba(0,0,0,.07); }
.tag-help { margin: 12px 0 0; font-style: italic; color: #666; line-height: 20px; }
.tag-list { display: flex; gap: 11px; margin-top: 7px; height: 20px; align-items: center; }
.tag { display: flex; align-items: center; gap: 2.5px; }
.tag svg { width: 16px; height: 16px; margin-left: -1.5px; color: #b4b9be; }
.tags-body .box-link { margin-top: 15px; }

.footer {
    display: flex;
    justify-content: space-between;
    margin-top: auto;
    padding: 0 0 10px;
    font-size: 12.75px;
    line-height: 20px;
    color: #777;
}
.footer em { margin-left: -2px; }
```
